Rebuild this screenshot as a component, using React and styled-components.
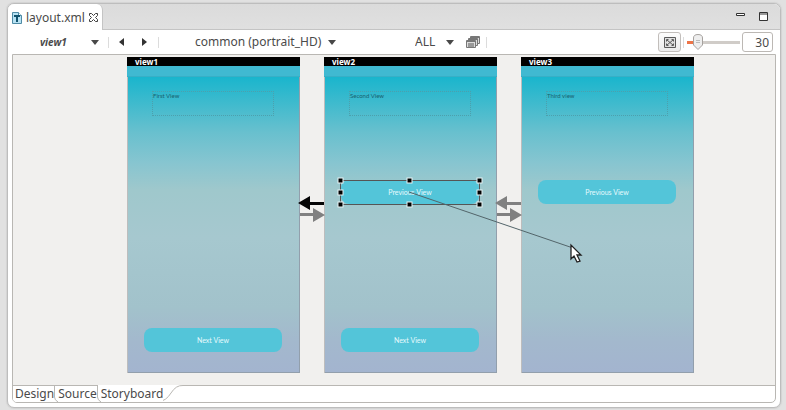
import React, { useState } from "react";
import styled, { createGlobalStyle, css } from "styled-components";

const GlobalStyle = createGlobalStyle`
  * { box-sizing: border-box; }
  body {
    margin: 0;
    background: #e1e1e1;
    color: #4a4a4a;
    font-family: "Noto Sans", "Open Sans", sans-serif;
    font-size: 12px;
    line-height: 16px;
  }
  button, input, select { font: inherit; color: inherit; margin: 0; }
`;

const Page = styled.div`
  display: flex;
  min-height: 100vh;
  padding: 3px 5px 2px 7px;
`;

const EditorWindow = styled.main`
  flex: 1;
  min-width: 0;
  display: flex;
  flex-direction: column;
  padding-bottom: 4px;
  background: #fff;
  border: 1px solid #bdbdbd;
  border-radius: 7px;
  box-shadow: 0 0 1px 1px #d3d3d3;
`;

const TitleBar = styled.header`
  display: flex;
  justify-content: space-between;
  height: 26px;
  border-bottom: 1px solid #c4c4c4;
  border-radius: 6px 6px 0 0;
  background: linear-gradient(#dbdbdb, #e0e0e0);
`;

const FileTab = styled.div`
  display: flex;
  align-items: center;
  gap: 4px;
  height: 26px;
  padding: 1px 4px 0;
  border-right: 1px solid #c4c4c4;
  border-radius: 6px 6px 0 0;
  background: #fff;
`;

const BareButton = styled.button`
  display: flex;
  align-items: center;
  justify-content: center;
  padding: 0;
  border: 0;
  background: none;
  svg { display: block; }
`;

const WindowControls = styled.div`
  display: flex;
  align-items: center;
  gap: 14px;
  padding: 0 12px 0 0;
`;

const Toolbar = styled.div`
  display: flex;
  align-items: center;
  height: 24px;
  padding: 0 7px 0 32px;
`;

const Picker = styled.label`
  display: flex;
  align-items: center;
  margin-left: ${(p) => p.$before || 0}px;
  svg { display: block; pointer-events: none; }
`;

const Select = styled.select`
  appearance: none;
  width: ${(p) => p.$width}px;
  height: 20px;
  padding: 0;
  border: 0;
  background: none;
  outline: none;
  ${(p) => p.$strong && css`
    font-size: 10px;
    font-weight: 700;
    font-style: italic;
  `}
`;

const Divider = styled.span`
  width: 1px;
  height: 11px;
  margin: 0 ${(p) => p.$after}px 0 ${(p) => p.$before}px;
  background: #dcdcdc;
`;

const Steps = styled.div`
  display: flex;
  gap: 18px;
`;

const ZoomTools = styled.div`
  display: flex;
  align-items: center;
  margin-left: auto;
`;

const FitButton = styled(BareButton)`
  width: 23px;
  height: 20px;
  border: 1px solid #c2bebb;
  border-radius: 3px;
  background: linear-gradient(#fdfdfd, #ececec);
`;

const thumb = `url("data:image/svg+xml,%3Csvg xmlns='http://www.w3.org/2000/svg' width='10' height='16'%3E%3Cpath d='M.5 4Q.5.5 5 .5T9.5 4v7L5 15.5.5 11z' fill='%23eee' stroke='%23a5a19e'/%3E%3Cpath d='M3 6.5h4M3 8.5h4' stroke='%23bbb'/%3E%3C/svg%3E")`;

const ZoomSlider = styled.input`
  appearance: none;
  width: 53px;
  height: 16px;
  margin: 0 2px 0 0;
  background: linear-gradient(90deg, #ee7447 20%, #d0ccc8 20%) center / 100% 3px no-repeat;
  &::-webkit-slider-thumb {
    appearance: none;
    width: 10px;
    height: 16px;
    background: ${thumb} no-repeat;
  }
`;

const ZoomValue = styled.input`
  width: 31px;
  height: 20px;
  padding: 0 3px 0 0;
  border: 1px solid #bcb8b4;
  border-radius: 3px;
  background: #fff;
  text-align: right;
`;

const Frame = styled.section`
  flex: 1;
  display: flex;
  flex-direction: column;
  margin: 0 4px;
  border: 1px solid #b9b7b3;
  border-radius: 0 0 5px 5px;
  background: #fff;
  overflow: hidden;
`;

const Canvas = styled.div`
  flex: 1;
  display: flex;
  align-items: flex-start;
  padding: 2px 16px 12px 114px;
  background: #f1f0ee;
`;

const ViewCard = styled.article`
  position: relative;
  flex: none;
  display: flex;
  flex-direction: column;
  width: 173px;
  height: 316px;
  background: linear-gradient(#18b5cd 19px, #68c0ce 75px, #87c5d0 106px, #9fc8cc 133px, #a6c8cf 180px, #a2c2cb 250px, #a3b8cd 285px, #a3b4cf 316px);
  box-shadow: inset 1px 0 #bdbdbd, inset -1px -1px #929fac;
`;

const ViewTitle = styled.h2`
  height: 9px;
  margin: 0;
  padding-left: 8px;
  background: #000;
  color: #fff;
  font-size: 8px;
  line-height: 10px;
`;

const StatusBar = styled.div`
  height: 11px;
  border-bottom: 1px solid #38afc6;
  background: #40b9d1;
`;

const Caption = styled.p`
  width: 122px;
  height: 25px;
  margin: 14px 0 0 25px;
  padding: 0;
  border: 1px dotted #4d9fac;
  color: #19616f;
  font-family: Lato, sans-serif;
  font-size: 6px;
  line-height: 8px;
`;

const Slot = styled.div`
  position: relative;
  width: 138px;
  height: 24px;
  margin: ${(p) => (p.$bottom ? "auto 0 21px 17px" : "64px 0 0 17px")};
`;

const NavButton = styled.button`
  display: block;
  width: 100%;
  height: 100%;
  padding: 0;
  border: 0;
  border-radius: 8px;
  background: #53c5d9;
  color: #e6fafd;
  font-family: Lato, sans-serif;
  font-size: 7px;
`;

const Selection = styled.svg`
  position: absolute;
  left: -5px;
  top: -3px;
  z-index: 1;
  overflow: visible;
  pointer-events: none;
`;

const Connector = styled.div`
  position: relative;
  flex: none;
  width: 24px;
  height: 1px;
  svg { position: absolute; left: -3px; top: 138px; z-index: 1; }
`;

const PageTabs = styled.nav`
  display: flex;
  height: 17px;
`;

const PageTab = styled.button`
  height: 17px;
  padding: 0;
  border: 0;
  border-top: 1px solid ${(p) => (p.$active ? "#fff" : "#b9b7b3")};
  background: #fff;
  line-height: 16px;
  &:first-child { padding-left: 2px; }
`;

const TabEdge = styled.svg`
  flex: none;
  display: block;
`;

const TabRest = styled.div`
  flex: 1;
  border-top: 1px solid #b9b7b3;
`;

const Caret = () => (
  <svg width="8" height="5"><path d="M0 0h8L4 5z" fill="#484848" /></svg>
);

function Arrows({ selected }) {
  return (
    <Connector>
      <svg width="29" height="28">
        <path d="M1 8 13 1v6h14v3H13v5z" fill={selected ? "#050505" : "#808080"} />
        <path d="M28 20 16 13v5H3v3h13v6z" fill="#808080" />
      </svg>
    </Connector>
  );
}

function SelectedOutline() {
  const handles = [[4, 3], [73, 3], [143, 3], [4, 15], [143, 15], [4, 27], [73, 27], [143, 27]];
  return (
    <Selection width="147" height="30">
      <rect x="4.5" y="3.5" width="139" height="24" fill="none" stroke="#555" />
      <path d="M73 15 237 71" stroke="#53656a" fill="none" />
      {handles.map(([x, y]) => (
        <rect key={`${x}-${y}`} x={x - 2} y={y - 2} width="5" height="5" fill="#000" stroke="#e8f4f5" />
      ))}
      <path d="M235 68v14l3-3 3 6 3-1-3-6h4z" fill="#fff" stroke="#222" strokeWidth="1.3" />
    </Selection>
  );
}

function View({ name, caption, previous, next, selected }) {
  return (
    <ViewCard>
      <ViewTitle>{name}</ViewTitle>
      <StatusBar />
      <Caption>{caption}</Caption>
      {previous && (
        <Slot>
          <NavButton>Previous View</NavButton>
          {selected && <SelectedOutline />}
        </Slot>
      )}
      {next && <Slot $bottom><NavButton>Next View</NavButton></Slot>}
    </ViewCard>
  );
}

export default function App() {
  const [zoom, setZoom] = useState(30);
  return (
    <Page>
      <GlobalStyle />
      <EditorWindow>
        <TitleBar>
          <FileTab>
            <svg width="10" height="12">
              <path d="M.5.5h6l3 3v8h-9z" fill="#b8e2f3" stroke="#4f8ba5" />
              <path d="M6.5.5v3h3" fill="#fff" stroke="#4f8ba5" />
              <path d="M2 3h6v2H6v5H4V5H2z" fill="#12536e" />
            </svg>
            <span>layout.xml</span>
            <BareButton aria-label="Close tab">
              <svg width="9" height="9" fill="none" stroke="#404040">
                <path d="M.5.5h2l2 2 2-2h2v2l-2 2 2 2v2h-2l-2-2-2 2h-2v-2l2-2-2-2z" />
              </svg>
            </BareButton>
          </FileTab>
          <WindowControls>
            <BareButton aria-label="Minimize">
              <svg width="9" height="14"><path d="M.5 3.5h8v2h-8z" fill="#fff" stroke="#333" /></svg>
            </BareButton>
            <BareButton aria-label="Maximize">
              <svg width="9" height="9"><path d="M.5.5h8v8h-8zM0 2h9" fill="#fff" stroke="#333" /></svg>
            </BareButton>
          </WindowControls>
        </TitleBar>

        <Toolbar>
          <Picker>
            <Select $width={51} $strong aria-label="View"><option>view1</option></Select>
            <Caret />
          </Picker>
          <Divider $before={9} $after={10} />
          <Steps>
            <BareButton aria-label="Previous view">
              <svg width="5" height="8"><path d="M5 0v8L0 4z" fill="#333" /></svg>
            </BareButton>
            <BareButton aria-label="Next view">
              <svg width="5" height="8"><path d="M0 0v8l5-4z" fill="#333" /></svg>
            </BareButton>
          </Steps>
          <Divider $before={11} $after={0} />
          <Picker $before={36}>
            <Select $width={133} aria-label="Screen"><option>common (portrait_HD)</option></Select>
            <Caret />
          </Picker>
          <Picker $before={79}>
            <Select $width={31} aria-label="Locale"><option>ALL</option></Select>
            <Caret />
          </Picker>
          <BareButton aria-label="Layers">
            <svg width="26" height="13" fill="#ddd" stroke="#777">
              <path d="M16.500 .5h9v7h-9z" />
              <path d="M17 1.500h8" />
              <path d="M14.500 2.500h9v7h-9zM15 3.500h8" />
              <path d="M12.500 4.500h9v7h-9zM13 5.500h8" />
              <path d="M14 7h6v4h-6z" fill="#999" stroke="none" />
            </svg>
          </BareButton>
          <Divider $before={6} $after={0} />
          <ZoomTools>
            <FitButton aria-label="Fit to window">
              <svg width="12" height="11" fill="none" stroke="#5a5a5a">
                <path d="M.5.5h11v10H.5z" fill="#e0e0e0" />
                <path d="M3 3l6 5M9 3 3 8M2.500 4.500v-2h2M7.500 2.500h2v2M9.500 6.500v2h-2M4.500 8.500h-2v-2" />
              </svg>
            </FitButton>
            <Divider $before={2} $after={3} />
            <ZoomSlider type="range" min="10" max="150" value={zoom} aria-label="Zoom" onChange={(e) => setZoom(Number(e.target.value))} />
            <ZoomValue type="text" value={zoom} aria-label="Zoom percent" onChange={(e) => setZoom(Number(e.target.value) || 0)} />
          </ZoomTools>
        </Toolbar>

        <Frame>
          <Canvas>
            <View name="view1" caption="First View" next />
            <Arrows selected />
            <View name="view2" caption="Second View" previous next selected />
            <Arrows />
            <View name="view3" caption="Third view" previous />
          </Canvas>
          <PageTabs>
            <PageTab>Design</PageTab>
            <TabEdge width="4" height="17" fill="none" stroke="#b9b7b3"><path d="M0 .5h4M.5 0v12q0 3 3.500 5" /></TabEdge>
            <PageTab>Source</PageTab>
            <TabEdge width="4" height="17" fill="none" stroke="#b9b7b3"><path d="M.5 0v12q0 3 3.500 5" /></TabEdge>
            <PageTab $active>Storyboard</PageTab>
            <TabEdge width="20" height="17" fill="none" stroke="#b9b7b3">
              <path d="M-4 16.500Q3 16 8 8T20 .5" />
            </TabEdge>
            <TabRest />
          </PageTabs>
        </Frame>
      </EditorWindow>
    </Page>
  );
}
